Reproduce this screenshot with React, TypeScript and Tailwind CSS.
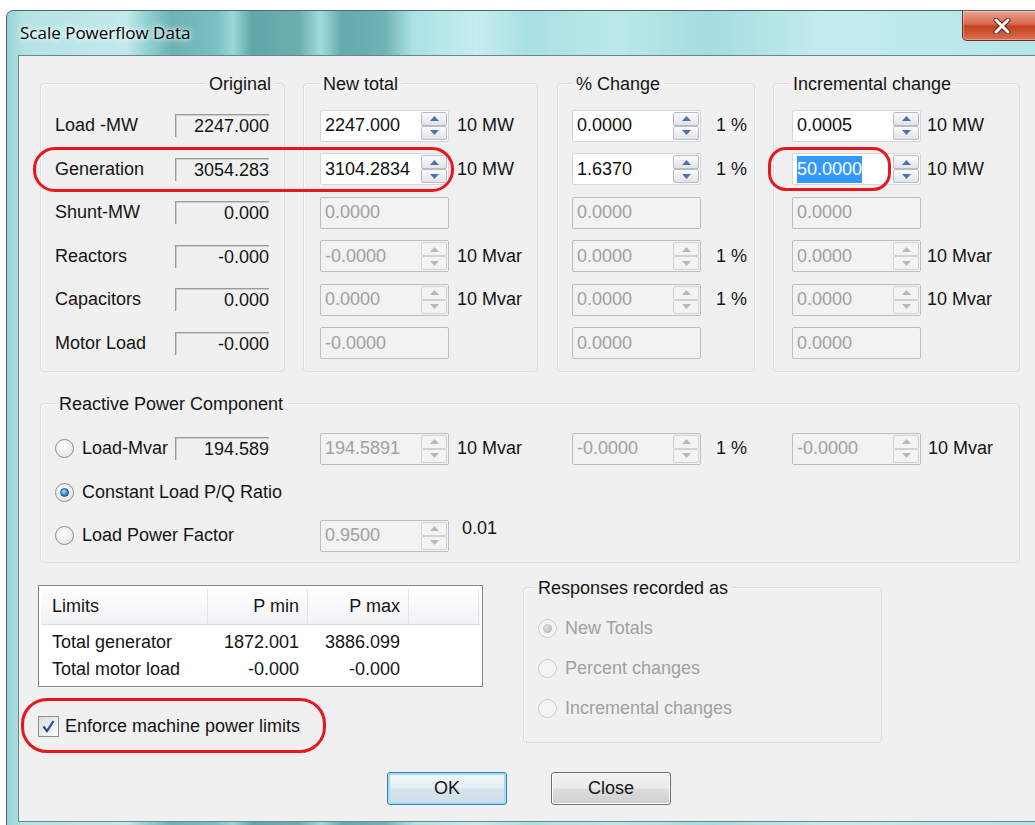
import React from "react";

type Mode = "on" | "off" | "plain";

type Row = {
  label: string;
  orig: string;
  total: string;
  pct: string;
  inc: string;
  unit?: string;
  mode: Mode;
  selected?: boolean;
};

const rows: Row[] = [
  { label: "Load -MW", orig: "2247.000", total: "2247.000", pct: "0.0000", inc: "0.0005", unit: "10 MW", mode: "on" },
  { label: "Generation", orig: "3054.283", total: "3104.2834", pct: "1.6370", inc: "50.0000", unit: "10 MW", mode: "on", selected: true },
  { label: "Shunt-MW", orig: "0.000", total: "0.0000", pct: "0.0000", inc: "0.0000", mode: "plain" },
  { label: "Reactors", orig: "-0.000", total: "-0.0000", pct: "0.0000", inc: "0.0000", unit: "10 Mvar", mode: "off" },
  { label: "Capacitors", orig: "0.000", total: "0.0000", pct: "0.0000", inc: "0.0000", unit: "10 Mvar", mode: "off" },
  { label: "Motor Load", orig: "-0.000", total: "-0.0000", pct: "0.0000", inc: "0.0000", mode: "plain" },
];

const limits = [
  { name: "Total generator", min: "1872.001", max: "3886.099" },
  { name: "Total motor load", min: "-0.000", max: "-0.000" },
];

function Arrow({ dir, disabled }: { dir: "up" | "down"; disabled?: boolean }) {
  return (
    <svg width="9" height="5" viewBox="0 0 9 5">
      <path d={dir === "up" ? "M0 5 L4.5 0 L9 5Z" : "M0 0 L4.5 5 L9 0Z"} fill={disabled ? "#b8b8b8" : "#4f70b8"} />
    </svg>
  );
}

function SpinButtons({ disabled }: { disabled?: boolean }) {
  const half = disabled
    ? "flex flex-1 items-center justify-center rounded-[2px] border border-[#d2d2d2] bg-[#f3f3f3]"
    : "flex flex-1 items-center justify-center rounded-[2px] border border-[#b9bcc2] bg-[linear-gradient(#fbfbfb,#e2e3e6)]";
  return (
    <div className="my-[1px] mr-[1px] flex w-[26px] flex-col">
      <div className={half}>
        <Arrow dir="up" disabled={disabled} />
      </div>
      <div className={half}>
        <Arrow dir="down" disabled={disabled} />
      </div>
    </div>
  );
}

function Field({ value, mode, selected }: { value: string; mode: Mode; selected?: boolean }) {
  const on = mode === "on";
  return (
    <div
      className={
        on
          ? "flex h-[32px] w-[129px] shrink-0 rounded-[2px] border border-[#d3d8de] bg-white"
          : "flex h-[32px] w-[129px] shrink-0 rounded-[2px] border border-[#bdbdbd] bg-[#f2f2f2]"
      }
    >
      <div className={on ? "flex flex-1 items-center pl-[4px] text-[#111]" : "flex flex-1 items-center pl-[4px] text-[#a0a0a0]"}>
        {selected ? <span className="bg-[#3399ff] text-white">{value}</span> : value}
      </div>
      {mode !== "plain" && <SpinButtons disabled={!on} />}
    </div>
  );
}

function ReadOut({ value }: { value: string }) {
  return (
    <div className="flex h-[23px] w-[94px] shrink-0 items-center justify-end border-t border-l border-[#9a9a9a] bg-[#f0f0f0] leading-none [box-shadow:inset_1px_1px_0_#cfcfcf]">
      {value}
    </div>
  );
}

function Radio({ checked, disabled }: { checked?: boolean; disabled?: boolean }) {
  return (
    <span
      className={
        disabled
          ? "flex h-[19px] w-[19px] shrink-0 items-center justify-center rounded-full border border-[#cacaca] bg-[#f4f4f4]"
          : "flex h-[19px] w-[19px] shrink-0 items-center justify-center rounded-full border border-[#8e8f8f] bg-[radial-gradient(circle_at_40%_35%,#ffffff,#dcdcdc)]"
      }
    >
      {checked && (
        <span
          className={
            disabled
              ? "h-[9px] w-[9px] rounded-full bg-[radial-gradient(circle_at_40%_35%,#e2e2e2,#a9a9a9)]"
              : "h-[9px] w-[9px] rounded-full border border-[#1b4f86] bg-[radial-gradient(circle_at_40%_35%,#a8e0ff,#1a6fc6_75%)]"
          }
        />
      )}
    </span>
  );
}

function Group({
  title,
  titleClass,
  className,
  children,
}: {
  title: string;
  titleClass: string;
  className: string;
  children: React.ReactNode;
}) {
  return (
    <div className={`shrink-0 rounded-[4px] border border-[#d5dfe5] [box-shadow:inset_1px_1px_0_#fbfbfb] ${className}`}>
      <div className={`-mt-[12px] flex h-[24px] ${titleClass}`}>
        <span className="bg-[#f0f0f0] px-[4px] leading-[24px]">{title}</span>
      </div>
      {children}
    </div>
  );
}

export default function App() {
  return (
    <div className="relative h-[825px] w-[1035px] overflow-hidden bg-white font-['Liberation_Sans',Arial,sans-serif] text-[18px] text-[#151515]">
      {/* window frame */}
      <div className="ml-[6px] mt-[10px] flex h-[820px] w-[1060px] flex-col rounded-t-[7px] border border-[#4f676a] bg-[linear-gradient(90deg,#98d4d7_0px,#b5e3e5_18px,#c3e9ea_120px,#91d0d3_140px,#6db2b5_165px,#7cc0c3_210px,#9ad9db_226px,#62a6a9_245px,#6eaeb1_292px,#9edcde_314px,#66aaad_335px,#70b2b5_378px,#aae2e4_405px,#c6edef_470px,#a9e0e2_520px,#bce8e9_610px,#a4dcdf_700px,#c4eced_820px,#b2e5e7_1060px)]">
        {/* title bar */}
        <div className="flex h-[44px] shrink-0">
          <div className="flex flex-1 items-center pl-[13px] font-['Open_Sans',sans-serif] text-[17px] text-black [text-shadow:0_0_8px_#ffffff,0_0_4px_#ffffff]">
            Scale Powerflow Data
          </div>
          <div className="mr-[23px] flex h-[30px] w-[80px] items-center justify-center rounded-b-[5px] border border-t-0 border-[#6e2a1c] bg-[linear-gradient(#eaa392,#d9684f_45%,#c5401f_52%,#d8704f)] [box-shadow:inset_0_0_0_1px_rgba(255,255,255,0.35)]">
            <svg width="18" height="16" viewBox="0 0 18 16">
              <path d="M3 2 L15 14 M15 2 L3 14" stroke="#5a2a22" strokeWidth="5" strokeLinecap="round" />
              <path d="M3 2 L15 14 M15 2 L3 14" stroke="#ffffff" strokeWidth="3" strokeLinecap="round" />
            </svg>
          </div>
        </div>

        {/* client area */}
        <div className="flex flex-1 px-[11px] pb-[7px]">
          <div className="flex flex-1 flex-col border border-[#6f8487] bg-[#f0f0f0] pt-[27px]">
            {/* scaling columns */}
            <div className="flex pl-[21px]">
              <Group title="Original" titleClass="justify-end pr-[9px]" className="h-[289px] w-[245px]">
                <div className="flex flex-col pl-[14px] pt-[8px]">
                  {rows.map((r) => (
                    <div key={r.label} className="flex h-[43.5px] items-center">
                      <span className="w-[120px]">{r.label}</span>
                      <ReadOut value={r.orig} />
                    </div>
                  ))}
                </div>
              </Group>

              <Group title="New total" titleClass="pl-[15px]" className="ml-[18px] h-[289px] w-[235px]">
                <div className="flex flex-col pl-[16px] pt-[8px]">
                  {rows.map((r) => (
                    <div key={r.label} className="flex h-[43.5px] items-center">
                      <Field value={r.total} mode={r.mode} />
                      {r.unit && <span className="ml-[8px] whitespace-nowrap">{r.unit}</span>}
                    </div>
                  ))}
                </div>
              </Group>

              <Group title="% Change" titleClass="pl-[14px]" className="ml-[19px] h-[289px] w-[198px]">
                <div className="flex flex-col pl-[14px] pt-[8px]">
                  {rows.map((r) => (
                    <div key={r.label} className="flex h-[43.5px] items-center">
                      <Field value={r.pct} mode={r.mode} />
                      {r.unit && <span className="ml-[15px] whitespace-nowrap">1 %</span>}
                    </div>
                  ))}
                </div>
              </Group>

              <Group title="Incremental change" titleClass="pl-[15px]" className="ml-[18px] h-[289px] w-[247px]">
                <div className="flex flex-col pl-[18px] pt-[8px]">
                  {rows.map((r) => (
                    <div key={r.label} className="flex h-[43.5px] items-center">
                      <Field value={r.inc} mode={r.mode} selected={r.selected} />
                      {r.unit && <span className="ml-[6px] whitespace-nowrap">{r.unit}</span>}
                    </div>
                  ))}
                </div>
              </Group>
            </div>

            {/* reactive power */}
            <div className="mt-[31px] flex pl-[21px]">
              <Group title="Reactive Power Component" titleClass="pl-[14px]" className="h-[160px] w-[980px]">
                <div className="flex flex-col pl-[14px] pt-[11px]">
                  <div className="flex h-[43.5px] items-center">
                    <div className="flex w-[120px] items-center gap-[8px]">
                      <Radio />
                      <span>Load-Mvar</span>
                    </div>
                    <ReadOut value="194.589" />
                    <div className="ml-[51px]">
                      <Field value="194.5891" mode="off" />
                    </div>
                    <span className="w-[123px] pl-[8px]">10 Mvar</span>
                    <Field value="-0.0000" mode="off" />
                    <span className="w-[91px] pl-[15px]">1 %</span>
                    <Field value="-0.0000" mode="off" />
                    <span className="pl-[7px]">10 Mvar</span>
                  </div>
                  <div className="flex h-[43.5px] items-center gap-[8px]">
                    <Radio checked />
                    <span>Constant Load P/Q Ratio</span>
                  </div>
                  <div className="flex h-[43.5px] items-center">
                    <div className="flex w-[265px] items-center gap-[8px]">
                      <Radio />
                      <span>Load Power Factor</span>
                    </div>
                    <Field value="0.9500" mode="off" />
                    <span className="mb-[14px] pl-[13px]">0.01</span>
                  </div>
                </div>
              </Group>
            </div>

            {/* limits and responses */}
            <div className="mt-[22px] flex items-start pl-[19px]">
              <div className="flex flex-col">
                <div className="h-[102px] w-[445px] border border-[#828790] bg-white p-[2px]">
                  <div className="flex h-[37px] border-b border-[#dcdfe3] bg-[linear-gradient(#ffffff,#f1f2f4)]">
                    <div className="flex w-[167px] items-center border-r border-[#e3e5e8] pl-[11px]">Limits</div>
                    <div className="flex w-[100px] items-center justify-end border-r border-[#e3e5e8] pr-[8px]">P min</div>
                    <div className="flex w-[101px] items-center justify-end border-r border-[#e3e5e8] pr-[8px]">P max</div>
                    <div className="w-[70px] border-r border-[#e3e5e8]" />
                  </div>
                  <div className="pt-[4px]">
                    {limits.map((l) => (
                      <div key={l.name} className="flex h-[27px] items-center">
                        <span className="w-[167px] pl-[11px]">{l.name}</span>
                        <span className="w-[100px] pr-[9px] text-right">{l.min}</span>
                        <span className="w-[101px] pr-[9px] text-right">{l.max}</span>
                      </div>
                    ))}
                  </div>
                </div>
                <div className="mt-[26px] flex items-center gap-[6px]">
                  <span className="flex h-[21px] w-[21px] items-center justify-center border border-[#8e8f8f] bg-[linear-gradient(135deg,#dcdcdc,#fbfbfb)]">
                    <svg width="15" height="15" viewBox="0 0 15 15">
                      <path d="M2.5 7.5 L6 12 L12.5 2" fill="none" stroke="#2a4aa6" strokeWidth="2.2" />
                    </svg>
                  </span>
                  <span>Enforce machine power limits</span>
                </div>
              </div>

              <Group title="Responses recorded as" titleClass="pl-[10px]" className="ml-[40px] mt-[2px] h-[156px] w-[359px]">
                <div className="flex flex-col pl-[14px] pt-[8px] text-[#a0a0a0]">
                  <div className="flex h-[40px] items-center gap-[8px]">
                    <Radio checked disabled />
                    <span>New Totals</span>
                  </div>
                  <div className="flex h-[40px] items-center gap-[8px]">
                    <Radio disabled />
                    <span>Percent changes</span>
                  </div>
                  <div className="flex h-[40px] items-center gap-[8px]">
                    <Radio disabled />
                    <span>Incremental changes</span>
                  </div>
                </div>
              </Group>
            </div>

            {/* dialog buttons */}
            <div className="mt-[29px] flex gap-[44px] pl-[368px]">
              <button className="flex h-[33px] w-[120px] items-center justify-center rounded-[3px] border border-[#3c7fb1] bg-[linear-gradient(#f4f8fb,#e6eef4_48%,#d6e3ec_52%,#cfdde8)] [box-shadow:inset_0_0_0_2px_#9fdcf7]">
                OK
              </button>
              <button className="flex h-[33px] w-[120px] items-center justify-center rounded-[3px] border border-[#707070] bg-[linear-gradient(#f2f2f2,#ebebeb_48%,#dddddd_52%,#cfcfcf)] [box-shadow:inset_0_0_0_1px_#fcfcfc]">
                Close
              </button>
            </div>
          </div>
        </div>
      </div>

      {/* red marker rings */}
      <div className="absolute left-[33px] top-[147px] h-[45px] w-[421px] rounded-[22px] border-[3px] border-[#e8161d]" />
      <div className="absolute left-[768px] top-[147px] h-[44px] w-[123px] rounded-[18px] border-[3px] border-[#e8161d]" />
      <div className="absolute left-[21px] top-[698px] h-[55px] w-[305px] rounded-[26px] border-[3px] border-[#e8161d]" />
    </div>
  );
}
